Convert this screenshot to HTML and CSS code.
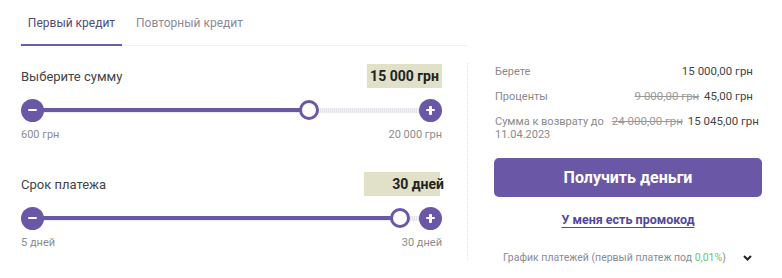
FILE: index.html
```html
<!DOCTYPE html>
<html lang="ru">
<head>
<meta charset="utf-8">
<link rel="stylesheet" href="styles.css">
</head>
<body>
<div class="page">
  <div class="left">
    <div class="tabs">
      <div class="tab active">Первый кредит</div>
      <div class="tab">Повторный кредит</div>
    </div>
    <div class="calc">
      <div class="field">
        <div class="field-head">
          <span class="field-label">Выберите сумму</span>
          <span class="value-box">15 000 грн</span>
        </div>
        <div class="slider">
          <span class="circle-btn minus"></span>
          <div class="track">
            <div class="fill" style="width: 70.6%"></div>
            <span class="thumb" style="left: 70.6%"></span>
          </div>
          <span class="circle-btn plus"></span>
        </div>
        <div class="limits"><span>600 грн</span><span>20 000 грн</span></div>
      </div>
      <div class="field second">
        <div class="field-head">
          <span class="field-label">Срок платежа</span>
          <span class="value-box days"><span class="over">30 дней</span></span>
        </div>
        <div class="slider">
          <span class="circle-btn minus"></span>
          <div class="track">
            <div class="fill" style="width: 95%"></div>
            <span class="thumb" style="left: 95%"></span>
          </div>
          <span class="circle-btn plus"></span>
        </div>
        <div class="limits"><span>5 дней</span><span>30 дней</span></div>
      </div>
    </div>
  </div>
  <div class="right">
    <div class="summary">
      <div class="row"><span class="lbl">Берете</span><span class="val">15 000,00 грн</span></div>
      <div class="row"><span class="lbl">Проценты</span><span class="val"><s>9 000,00 грн</s> 45,00 грн</span></div>
      <div class="row"><span class="lbl wrap">Сумма к возврату до<br>11.04.2023</span><span class="val"><s>24 000,00 грн</s> 15 045,00 грн</span></div>
    </div>
    <button class="get-money">Получить деньги</button>
    <a class="promo">У меня есть промокод</a>
    <div class="schedule">
      <span>График платежей (первый платеж под <span class="green">0,01%</span>)</span>
      <svg class="chev" width="9" height="6" viewBox="0 0 9 6"><path d="M1 1l3.5 3.5L8 1" fill="none" stroke="#222" stroke-width="2"/></svg>
    </div>
  </div>
</div>
</body>
</html>
```

FILE: styles.css
```css
* { box-sizing: border-box; }
html, body { margin: 0; padding: 0; background: #fff; }
body {
  font-family: Roboto, "Noto Sans", sans-serif;
  color: #444;
  width: 782px;
  height: 278px;
  overflow: hidden;
}
.page {
  display: flex;
  padding-left: 21px;
}
.left {
  width: 447px;
  flex: none;
}
.tabs {
  display: flex;
  height: 46px;
  border-bottom: 1px solid #f1f1f3;
  margin-right: 1px;
}
.tab {
  font-size: 12px;
  color: #8a8a99;
  padding: 16px 0 0;
  height: 46px;
}
.tab.active {
  color: #4e4a7e;
  width: 101px;
  text-align: center;
  border-bottom: 2px solid #6b5cb0;
}
.tab + .tab { margin-left: 14px; }
.calc {
  border-right: 1px dotted #e3e3e6;
  margin-top: 17px;
  padding: 1px 0 0;
  height: 197px;
  width: 447px;
}
.field { width: 421px; }
.field.second { margin-top: 31px; }
.field-head {
  display: flex;
  justify-content: space-between;
  align-items: center;
  height: 24px;
}
.field-label { font-size: 13px; color: #444; }
.value-box {
  background: #e1e0c8;
  height: 24px;
  width: 75px;
  line-height: 24px;
  font-size: 14px;
  font-weight: 700;
  color: #222;
  text-align: center;
}
.value-box.days {
  width: 76px;
  margin-right: 2px;
  text-align: right;
}
.value-box .over { margin-right: -4px; }
.slider {
  display: flex;
  align-items: center;
  margin-top: 10px;
  height: 24px;
}
.circle-btn {
  width: 23px;
  height: 23px;
  border-radius: 50%;
  background: #6a57a6;
  flex: none;
  position: relative;
}
.circle-btn::before, .circle-btn.plus::after {
  content: "";
  position: absolute;
  background: #fff;
  left: 7px;
  top: 10px;
  width: 9px;
  height: 2.5px;
  border-radius: 1px;
}
.circle-btn.plus::after {
  left: 10px;
  top: 7px;
  width: 2.5px;
  height: 9px;
}
.track {
  flex: 1;
  position: relative;
  height: 5px;
  background: repeating-linear-gradient(90deg, #e4e4e8 0 1px, #f3f3f5 1px 2px);
}
.fill {
  height: 4px;
  margin-top: 0.5px;
  background: #6a57a6;
  margin-left: -2px;
}
.thumb {
  position: absolute;
  top: 50%;
  width: 20px;
  height: 20px;
  margin: -10px 0 0 -10px;
  border-radius: 50%;
  background: #fff;
  border: 3px solid #6a57a6;
}
.limits {
  display: flex;
  justify-content: space-between;
  font-size: 11px;
  color: #8c8c8c;
  margin-top: 6px;
}
.right {
  width: 268px;
  margin-left: 26px;
  padding-top: 65px;
  display: flex;
  flex-direction: column;
}
.summary {
  padding-right: 9px;
  padding-left: 1px;
}
.row {
  display: flex;
  justify-content: space-between;
  align-items: flex-start;
  gap: 8px;
  font-size: 11px;
  line-height: 13px;
  margin-bottom: 12px;
}
.row:last-child { margin-bottom: 0; }
.lbl { color: #8a8a8a; }
.lbl.wrap { flex: none; white-space: nowrap; }
.val { color: #444; font-size: 11.5px; white-space: nowrap; }
.val s { color: #999; margin-right: 2px; }
.get-money {
  margin-top: 17px;
  height: 39px;
  border: 0;
  border-radius: 5px;
  background: #6a57a5;
  color: #fff;
  font-family: inherit;
  font-size: 16px;
  font-weight: 700;
  padding: 0;
}
.promo {
  margin-top: 15px;
  align-self: center;
  font-size: 12.5px;
  font-weight: 700;
  color: #54479a;
  text-decoration: underline;
  text-underline-offset: 3px;
}
.schedule {
  margin-top: 24px;
  padding-left: 9px;
  padding-right: 10px;
  display: flex;
  justify-content: space-between;
  align-items: center;
  font-size: 10.5px;
  color: #8a8a94;
}
.green { color: #6cc26a; }
.chev { flex: none; }
```
